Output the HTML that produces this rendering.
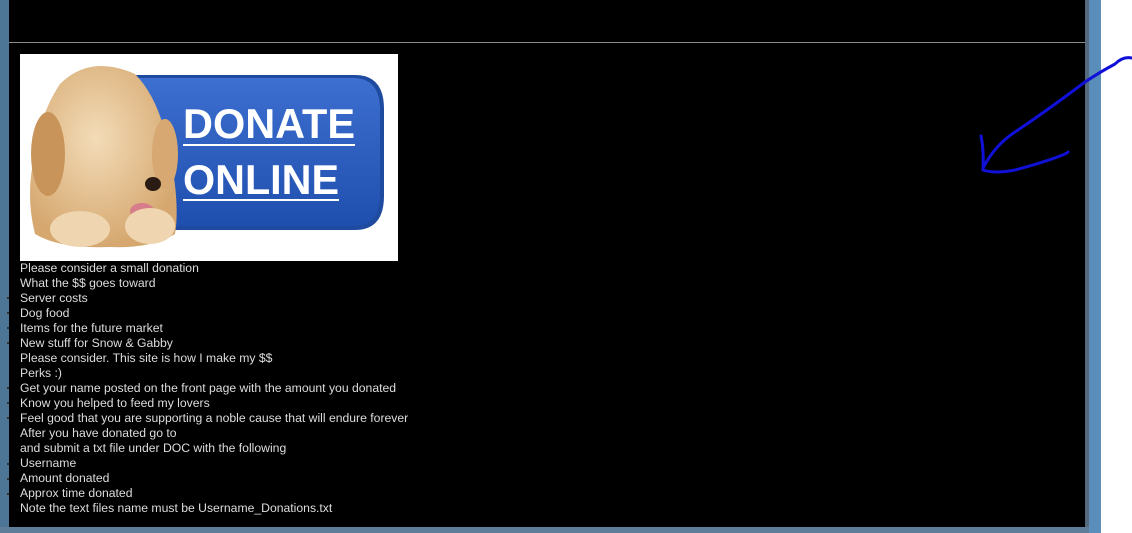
<!DOCTYPE html>
<html><head><style>
html,body{margin:0;padding:0}
body{width:1132px;height:533px;position:relative;overflow:hidden;background:#fff;font-family:"Liberation Sans",Arial,sans-serif}
#lb{position:absolute;left:0;top:0;width:9px;height:533px;background:#4d7596}
#panel{position:absolute;left:9px;top:0;width:1076px;height:527px;background:#000}
#rb{position:absolute;left:1085px;top:0;width:4px;height:533px;background:#566a7e}
#rb2{position:absolute;left:1089px;top:0;width:12px;height:533px;background:#5a8db9}
#bb{position:absolute;left:0;top:527px;width:1089px;height:6px;background:#5d7d99}
#hr{position:absolute;left:9px;top:42px;width:1076px;height:1px;background:#8a8a8a}
#txt{position:absolute;left:20px;top:261px;color:#ddd;font-size:12.2px;line-height:15px}
.d{position:absolute;left:7px;width:2px;height:2px;background:#333}
</style></head><body>
<div id="lb"></div><div id="panel"></div><div id="rb"></div><div id="rb2"></div><div id="bb"></div><div id="hr"></div>
<svg style="position:absolute;left:20px;top:54px" width="378" height="207" viewBox="0 0 378 207">
<rect width="378" height="207" fill="#fff"/>
<defs><linearGradient id="g" x1="0" y1="0" x2="0" y2="1"><stop offset="0" stop-color="#3d6fd0"/><stop offset="1" stop-color="#1f4fae"/></linearGradient>
<radialGradient id="p" cx="0.45" cy="0.4" r="0.6"><stop offset="0" stop-color="#f3dcb8"/><stop offset="1" stop-color="#d6a870"/></radialGradient></defs>
<path d="M110 21 H335 Q364 21 364 55 V142 Q364 176 335 176 H110 Z" fill="#1e4aa0"/>
<path d="M112 24 H333 Q360 24 360 56 V140 Q360 172 333 172 H112 Z" fill="url(#g)"/>
<text x="163" y="84" font-family="Liberation Sans,sans-serif" font-weight="bold" font-size="42" fill="#fff" textLength="172" lengthAdjust="spacingAndGlyphs">DONATE</text>
<rect x="163" y="90" width="172" height="2" fill="#fff"/>
<text x="163" y="140" font-family="Liberation Sans,sans-serif" font-weight="bold" font-size="42" fill="#fff" textLength="156" lengthAdjust="spacingAndGlyphs">ONLINE</text>
<rect x="163" y="145" width="156" height="2" fill="#fff"/>
<path d="M40 30 Q70 0 115 20 Q140 45 150 100 Q160 150 155 180 Q130 195 90 193 Q40 195 15 180 Q5 140 15 100 Q20 60 40 30 Z" fill="url(#p)"/>
<ellipse cx="28" cy="100" rx="17" ry="42" fill="#c8945a"/>
<ellipse cx="145" cy="100" rx="13" ry="35" fill="#d7a871"/>
<ellipse cx="133" cy="130" rx="8" ry="7" fill="#2a1c14"/>
<ellipse cx="122" cy="157" rx="12" ry="8" fill="#d77c8a"/>
<ellipse cx="60" cy="175" rx="30" ry="18" fill="#efd6b0"/>
<ellipse cx="130" cy="172" rx="25" ry="18" fill="#efd6b0"/>
</svg>
<svg style="position:absolute;left:975px;top:50px" width="157" height="130"><path d="M157 8 Q148 6 140 14 Q125 22 110 32 Q70 62 40 82 Q20 95 8 118 M6 86 Q9 100 8 120 Q20 124 40 120 Q70 112 85 106 Q91 104 93 102" fill="none" stroke="#1010d8" stroke-width="3" stroke-linecap="round"/></svg>
<div class="d" style="top:297px"></div><div class="d" style="top:312px"></div><div class="d" style="top:327px"></div><div class="d" style="top:342px"></div><div class="d" style="top:387px"></div><div class="d" style="top:402px"></div><div class="d" style="top:417px"></div><div class="d" style="top:463px"></div><div class="d" style="top:478px"></div><div class="d" style="top:493px"></div>
<div id="txt">Please consider a small donation<br>What the $$ goes toward<br>Server costs<br>Dog food<br>Items for the future market<br>New stuff for Snow &amp; Gabby<br>Please consider. This site is how I make my $$<br>Perks :)<br>Get your name posted on the front page with the amount you donated<br>Know you helped to feed my lovers<br>Feel good that you are supporting a noble cause that will endure forever<br>After you have donated go to<br>and submit a txt file under DOC with the following<br>Username<br>Amount donated<br>Approx time donated<br>Note the text files name must be Username_Donations.txt</div>
</body></html>
